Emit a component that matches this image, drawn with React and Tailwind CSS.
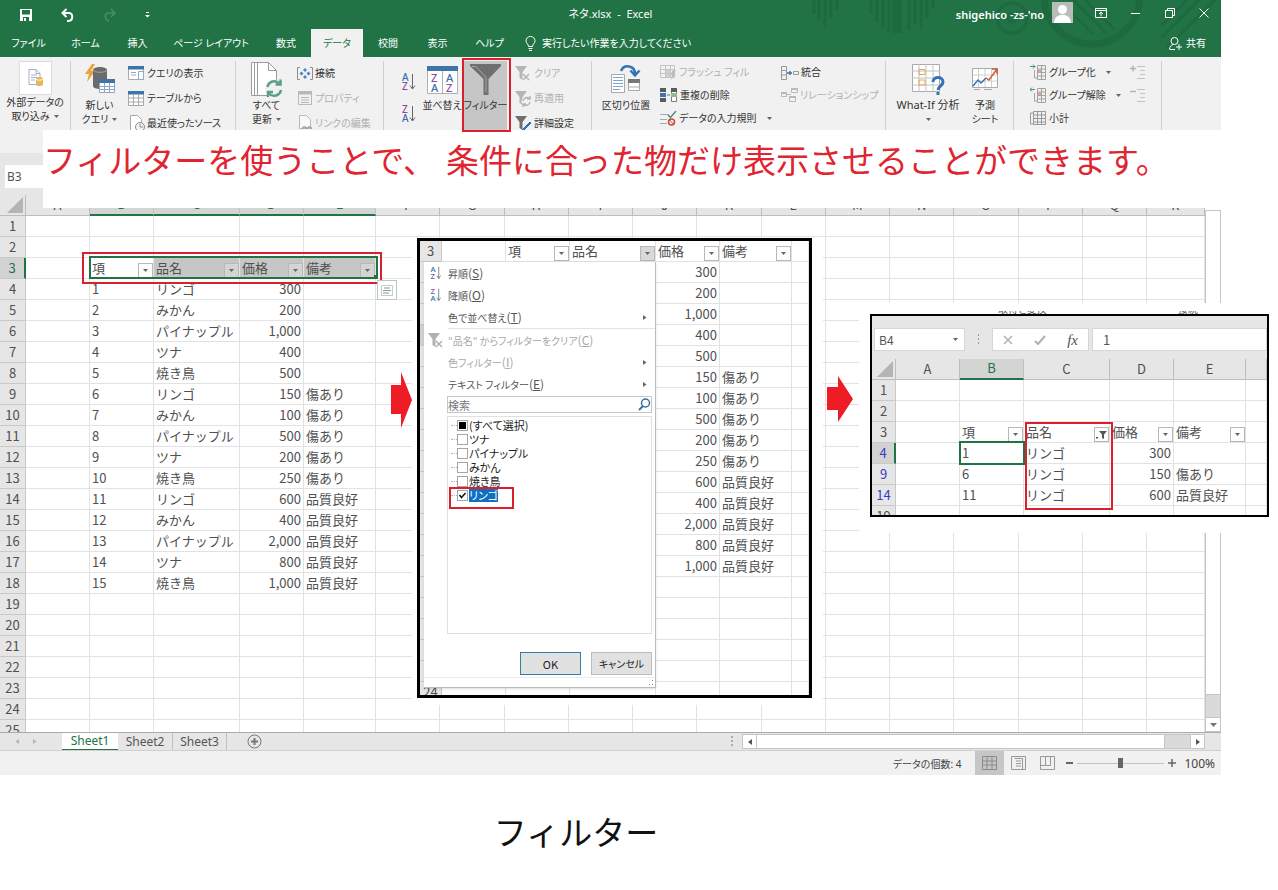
import React from "react";

const DATA = [
  ["1", "リンゴ", "300", ""],
  ["2", "みかん", "200", ""],
  ["3", "パイナップル", "1,000", ""],
  ["4", "ツナ", "400", ""],
  ["5", "焼き鳥", "500", ""],
  ["6", "リンゴ", "150", "傷あり"],
  ["7", "みかん", "100", "傷あり"],
  ["8", "パイナップル", "500", "傷あり"],
  ["9", "ツナ", "200", "傷あり"],
  ["10", "焼き鳥", "250", "傷あり"],
  ["11", "リンゴ", "600", "品質良好"],
  ["12", "みかん", "400", "品質良好"],
  ["13", "パイナップル", "2,000", "品質良好"],
  ["14", "ツナ", "800", "品質良好"],
  ["15", "焼き鳥", "1,000", "品質良好"],
];

const HEADINGS = ["項", "品名", "価格", "備考"];

/* ---------- small shared drawings ---------- */

function Svg({ w, h, vb, className = "", children }) {
  return (
    <svg width={w} height={h} viewBox={vb || `0 0 ${w} ${h}`} fill="none" className={`shrink-0 ${className}`} aria-hidden="true">
      {children}
    </svg>
  );
}

function Caret({ color = "#666" }) {
  return (
    <Svg w={5} h={3}>
      <path d="M0 0h5L2.5 3z" fill={color} />
    </Svg>
  );
}

function SortIcon({ top = "A", bottom = "Z", small = false }) {
  const a = top === "A" ? "#3b6fb0" : "#8c4a9a";
  const b = top === "A" ? "#8c4a9a" : "#3b6fb0";
  return (
    <Svg w={small ? 12 : 14} h={small ? 14 : 18} vb="0 0 14 18" className="overflow-visible">
      <g fontSize="10" fontWeight="500" fontFamily="Noto Sans">
        <text x="0" y="8" fill={a}>{top}</text>
        <text x="0" y="17" fill={b}>{bottom}</text>
      </g>
      <path d="M10.500 1v15M8 12.500l2.500 3.500 2.500-3.500" stroke="#666" />
    </Svg>
  );
}

function FunnelSmall({ kind, color = "#b5b5b5" }) {
  return (
    <Svg w={17} h={17}>
      <path d="M0 1h12L7.500 7v8l-3-2V7z" fill={color} />
      {kind === "clear" && <path d="M8 9l6 6M14 9l-6 6" stroke={color} strokeWidth="1.500" />}
      {kind === "reapply" && (
        <g stroke={color} strokeWidth="1.500">
          <circle cx="11.500" cy="11.500" r="5" fill="#f1f1f1" stroke="none" />
          <path d="M8 11a4 4 0 0 1 7-2M15 12a4 4 0 0 1-7 2M15 6v3h-3M8 17v-3h3" />
        </g>
      )}
      {kind === "advanced" && <path d="M15 7l-7 7-1 2 2-1 7-7z" fill="#2f6db5" stroke="#2f6db5" />}
    </Svg>
  );
}

/* ---------- worksheet grid ---------- */

function FilterButton({ name, active, tone = "bg-[#fdfdfd]" }) {
  return (
    <button type="button" aria-label={`${name} のフィルター`} className={`flex size-[15px] shrink-0 items-center justify-center border border-[#b8b8b8] ${tone}`}>
      {active ? (
        <Svg w={11} h={9}>
          <path d="M3 1h8L8 4.500V9L6 8V4.500z" fill="#555" />
          <path d="M0 7h2v1.500H0z" fill="#555" />
        </Svg>
      ) : (
        <Caret />
      )}
    </button>
  );
}

function HeadCell({ name, active, tone }) {
  return (
    <div className="flex h-5 items-end justify-between">
      <span className="leading-5">{name}</span>
      <FilterButton name={name} active={active} tone={tone} />
    </div>
  );
}

function Grid({ cols, head, rows, label }) {
  return (
    <table aria-label={label} className="w-full table-fixed border-separate border-spacing-0 text-[13px] leading-5 text-[#505050] [font-feature-settings:normal]">
      <colgroup>
        {cols.map((c, i) => (
          <col key={i} className={c.w} />
        ))}
      </colgroup>
      {head && (
        <thead>
          <tr className="h-[21px]">
            <th className="border-r border-b border-[#bdbdbd] bg-[#e6e6e6] p-0">
              <Svg w={18} h={18} className="ml-auto mr-px">
                <path d="M17 1v16H1z" fill="#b4b4b4" />
              </Svg>
            </th>
            {cols.slice(1).map((c, i) => (
              <th
                key={i}
                className={`h-[21px] border-r p-0 font-normal ${
                  c.on ? "border-b-2 border-r-[#bcc4be] border-b-[#217346] bg-[#d2d5d2] text-[#217346]" : "border-b border-[#bdbdbd] bg-[#e6e6e6]"
                } `}
              >
                <div className="h-[19px] leading-[17px]">{c.label}</div>
              </th>
            ))}
          </tr>
        </thead>
      )}
      <tbody>
        {rows.map((r) => (
          <tr key={r.n} className="h-[21px]">
            <th
              scope="row"
              className={`h-[21px] border-b border-[#c9c9c9] p-0 font-normal ${
                r.on ? "border-r-2 border-r-[#217346] bg-[#d2d2d2]" : "border-r bg-[#e6e6e6]"
              } ${r.ink || ""}`}
            >
              <div className="flex h-5 justify-center">{r.blank ? null : r.n}</div>
            </th>
            {cols.slice(1).map((c, i) => (
              <td
                key={i}
                className={`h-[21px] border-r border-b border-[#e2e2e2] p-0 whitespace-nowrap ${c.right && !r.heading ? "pr-0.5 text-right" : "pl-0.5"} ${
                  r.fill && r.fill[i] ? "bg-[#c6c6c6]" : ""
                }`}
              >
                {r.cells[i] || null}
              </td>
            ))}
          </tr>
        ))}
      </tbody>
    </table>
  );
}

const MAIN_COLS = [
  { w: "w-[26px]" },
  { w: "w-16", label: "A" },
  { w: "w-16", label: "B", on: true },
  { w: "w-[86px]", label: "C", on: true },
  { w: "w-16", label: "D", on: true, right: true },
  { w: "w-[72px]", label: "E", on: true },
  ..."FGHIJKLMNOPQ".split("").map((label) => ({ w: "", label })),
  { w: "w-[58px]", label: "R" },
];

const MAIN_ROWS = Array.from({ length: 25 }, (_, k) => {
  const n = k + 1;
  if (n === 3) {
    return {
      n,
      on: true,
      ink: "text-[#217346]",
      heading: true,
      fill: [false, false, true, true, true],
      cells: [
        "",
        ...HEADINGS.map((name, i) => (
          <div key={name} className="relative">
            <HeadCell name={name} tone={i === 0 ? "bg-[#fdfdfd]" : "bg-[#d4d4d4]"} />
            {i === 0 && (
              <div className="pointer-events-none absolute -top-0.5 -left-[3px] z-10 h-[23px] w-[289px] border-2 border-[#217346]">
                <div className="absolute -right-0.5 -bottom-0.5 size-1 bg-[#217346]" />
              </div>
            )}
          </div>
        )),
      ],
    };
  }
  return { n, cells: DATA[n - 4] ? ["", ...DATA[n - 4]] : [] };
});

const MENU_COLS = [
  { w: "w-[22px]" },
  { w: "w-16" },
  { w: "w-16" },
  { w: "w-[86px]" },
  { w: "w-16", right: true },
  { w: "w-[72px]" },
  { w: "" },
];

const MENU_ROWS = Array.from({ length: 22 }, (_, k) => {
  const n = k + 3;
  if (n === 3) {
    return {
      n,
      heading: true,
      cells: ["", ...HEADINGS.map((name, i) => <HeadCell key={name} name={name} tone={i === 1 ? "bg-[#d9d9d9]" : "bg-[#fdfdfd]"} />)],
    };
  }
  const d = DATA[n - 4];
  return { n, blank: n < 24, on: n === 7, cells: d ? ["", "", "", d[2], d[3]] : [] };
});

const RESULT_COLS = [
  { w: "w-6" },
  { w: "w-16", label: "A" },
  { w: "w-16", label: "B", on: true },
  { w: "w-[86px]", label: "C" },
  { w: "w-16", label: "D", right: true },
  { w: "w-[72px]", label: "E" },
  { w: "", label: "" },
];

const BLUE = "text-[#3b3bc4]";

const RESULT_ROWS = [
  { n: 1, cells: [] },
  { n: 2, cells: [] },
  { n: 3, heading: true, cells: ["", ...HEADINGS.map((name, i) => <HeadCell key={name} name={name} active={i === 1} />)] },
  {
    n: 4,
    on: true,
    ink: BLUE,
    cells: [
      "",
      <div key="b4" className="relative">
        {DATA[0][0]}
        <div className="pointer-events-none absolute -top-0.5 -left-[3px] h-6 w-[66px] border-2 border-[#217346]" />
      </div>,
      ...DATA[0].slice(1),
    ],
  },
  { n: 9, ink: BLUE, cells: ["", ...DATA[5]] },
  { n: 14, ink: BLUE, cells: ["", ...DATA[10]] },
  { n: 19, cells: [] },
];

/* ---------- title bar and ribbon tabs ---------- */

function TitleBar() {
  return (
    <div className="relative flex h-[29px] items-center px-3">
      <div className="flex flex-1 items-center gap-[29px]">
        <button type="button" aria-label="上書き保存" className="ml-2">
          <Svg w={12} h={12}>
            <path d="M0 0h12v12H0z" fill="#fff" />
            <path d="M2 1h8v4.500H2zM3 8h6v4H3z" fill="#217346" />
            <path d="M4 9h2v3H4z" fill="#fff" />
          </Svg>
        </button>
        <button type="button" aria-label="元に戻す">
          <Svg w={13} h={14}>
            <path d="M5.500 1L1.500 5l4 4M2 5h5.500c5 0 5 7.500 0 8H6" stroke="#fff" strokeWidth="2" />
          </Svg>
        </button>
        <button type="button" aria-label="やり直し">
          <Svg w={13} h={14}>
            <path d="M8 1l4 4-4 4M11 5H6c-5 0-5 6 0 8" stroke="#4a8d68" strokeWidth="1.500" />
          </Svg>
        </button>
        <button type="button" aria-label="クイック アクセス ツール バーのユーザー設定">
          <Svg w={5} h={6}>
            <path d="M1 0h3v1H1zM0 3h5L2.500 5.500z" fill="#fff" />
          </Svg>
        </button>
      </div>
      <h1 className="text-[11px] whitespace-pre">ネタ.xlsx  -  Excel</h1>
      <div className="flex flex-1 items-center justify-end pb-1">
        <span className="pt-1 text-[11px] leading-4 font-semibold">shigehico -zs-'no</span>
        <Svg w={21} h={21} className="ml-2">
          <path d="M0 0h21v21H0z" fill="#b9bdb9" />
          <circle cx="10.500" cy="7.500" r="4.500" fill="#fff" />
          <path d="M2 21c0-11 17-11 17 0z" fill="#fff" />
        </Svg>
        <button type="button" aria-label="リボンの表示オプション" className="ml-[22px]">
          <Svg w={12} h={10}>
            <path d="M.5.5h11v9H.5zM.5 2.500h11M6 8.500v-4M4 6l2-2 2 2" stroke="#fff" />
          </Svg>
        </button>
        <button type="button" aria-label="最小化" className="ml-6">
          <Svg w={10} h={10}>
            <path d="M0 5.500h9" stroke="#fff" />
          </Svg>
        </button>
        <button type="button" aria-label="元のサイズに戻す" className="ml-6">
          <Svg w={10} h={10}>
            <path d="M.5 2.500h7v7h-7zM2.500 2.500v-2h7v7h-2" stroke="#fff" />
          </Svg>
        </button>
        <button type="button" aria-label="閉じる" className="ml-6">
          <Svg w={10} h={10}>
            <path d="M.5.5l9 9M9.500.5l-9 9" stroke="#fff" />
          </Svg>
        </button>
      </div>
    </div>
  );
}

const TABS = [
  ["ファイル", "w-[57px]"],
  ["ホーム", "w-[57px]"],
  ["挿入", "w-[47px]"],
  ["ページ レイアウト", "w-[100px]"],
  ["数式", "w-[50px]"],
  ["データ", "w-[52px]"],
  ["校閲", "w-[50px]"],
  ["表示", "w-[49px]"],
  ["ヘルプ", "w-[55px]"],
];

function TabBar() {
  return (
    <nav className="relative flex h-7 items-stretch text-[10px]">
      {TABS.map(([name, w]) => (
        <button key={name} type="button" className={`${w} whitespace-nowrap ${name === "データ" ? "bg-[#f1f1f1] text-[#217346]" : ""}`}>
          {name}
        </button>
      ))}
      <button type="button" className="flex items-center gap-1.5 pl-2 whitespace-nowrap">
        <Svg w={11} h={15}>
          <path d="M3.500 10.500C3.500 8 1 7.500 1 4.800a4.400 4.300 0 0 1 9 0c0 2.700-2.500 3.200-2.500 5.700zM3.500 12.500h4M4 14.500h3" stroke="#fff" />
        </Svg>
        実行したい作業を入力してください
      </button>
      <button type="button" className="ml-auto flex items-center gap-1 pr-[15px]">
        <Svg w={13} h={13}>
          <circle cx="5.500" cy="4" r="3.500" stroke="#fff" />
          <path d="M.5 12.500c0-3 2-5 4-5M7 10h6M10 7v6M1 12.500h5" stroke="#fff" />
        </Svg>
        共有
      </button>
    </nav>
  );
}

function HeaderPattern() {
  return (
    <Svg w={410} h={57} className="absolute top-0 right-0">
      <g stroke="#1e693f" strokeWidth="3">
        <path d="M3 0v14M8 0v20M14 0v27M20 0v18M26 0v10M60 0v14M66 0v22M72 0v28M78 0v32M98 0v30M104 0v24M110 0v28M116 0v18M122 0v8" />
        <path d="M86 0v33" strokeWidth="9" />
        <circle cx="201" cy="18" r="15" />
        <circle cx="201" cy="18" r="4" />
        <circle cx="281" cy="-4" r="48" strokeWidth="7" />
        <path d="M252 4l30 30M262 0l34 34M274 0l30 30M350 38l38-38M350 26l26-26M356 48l48-48" />
      </g>
    </Svg>
  );
}

/* ---------- ribbon ---------- */

function Group({ w, children }) {
  return <div className={`flex shrink-0 items-start border-r border-[#cfcfcf] ${w}`}>{children}</div>;
}

function Big({ icon, lines, caret, iconBox = "h-[37px]", className = "" }) {
  return (
    <button type="button" className={`flex flex-col items-center whitespace-nowrap ${className}`}>
      <span className={`flex items-center ${iconBox}`}>{icon}</span>
      {lines.map((t, i) => (
        <span key={i} className="flex h-[14px] items-center gap-1 leading-[14px]">
          {t}
          {caret && i === lines.length - 1 && <Caret />}
        </span>
      ))}
    </button>
  );
}

function Small({ icon, text, off, caret, tall }) {
  return (
    <button type="button" className={`flex items-center gap-0.5 whitespace-nowrap ${tall ? "h-[25px]" : "h-[23px]"} ${off ? "text-[#b0b0b0]" : ""}`}>
      {icon}
      <span>{text}</span>
      {caret && (
        <span className="ml-2">
          <Caret />
        </span>
      )}
    </button>
  );
}

function MiniTable({ head = "#3f74a8", line = "#a9a9a9", w = 17 }) {
  return (
    <Svg w={w} h={16} vb="0 0 17 16">
      <path d="M.5 .5h15v14h-15z" fill="#fff" stroke={line} />
      <path d="M0 0h16v3.500H0z" fill={head} />
      <path d="M1 7h14M1 11h14M5.500 4v11M10.500 4v11" stroke={line} />
    </Svg>
  );
}

function FlashGlyph() {
  return (
    <Svg w={17} h={16}>
      <path d="M.5.500h14v12H.5zM.5 4.500h14M.5 8.500h14M5.500.5v12M10.500.5v12" stroke="#c4c4c4" />
      <path d="M6 5h4v3H6zM6 9h4v3H6z" fill="#cfcfcf" />
      <path d="M13 5l-3 5h2l-1 5 5-6h-2l2-4z" fill="#bdbdbd" />
    </Svg>
  );
}

function GroupGlyph({ dir }) {
  return (
    <Svg w={17} h={17}>
      <path d={dir === "in" ? "M0 2.500h5M3 .5l2 2-2 2" : "M5 2.500H0M2 .5l-2 2 2 2"} stroke="#4c8f74" />
      <path d="M7.500 1.500h8v14h-8zM7.500 5h8M7.500 8.500h8M7.500 12h8M11.500 1.500v14M4.500 6v8h3" stroke="#a2a2a2" />
      <path d="M8 5.500h3v3H8z" fill="#d7a48c" />
    </Svg>
  );
}

function DetailGlyph({ plus }) {
  return (
    <Svg w={16} h={15}>
      <path d={plus ? "M0 3.500h6M3 .5v6" : "M0 3.500h6"} stroke="#b5b5b5" strokeWidth="1.500" />
      <path d="M7 1.500h8M10 5.500h5M10 9.500h5M7 13.500h8" stroke="#c4c4c4" />
    </Svg>
  );
}

function Ribbon() {
  return (
    <div className="flex h-24 overflow-hidden bg-[#f1f1f1] pt-1 text-[10px] text-[#333]">
      <Group w="h-23 w-[71px] justify-center">
        <Big
          caret
          iconBox="h-[34px]"
          lines={["外部データの", "取り込み"]}
          icon={
            <span className="flex h-[34px] w-[33px] items-center justify-center border border-[#dcdcdc] bg-white">
              <Svg w={15} h={18}>
                <path d="M1 .5h7l4 4v11H1z" fill="#fff" stroke="#9fb0c6" />
                <path d="M8 .5v4h4M3 6h6M3 8.500h6M3 11h4" stroke="#9fb0c6" />
                <path d="M8 9.500c0-2 7-2 7 0v6c0 2-7 2-7 0z" fill="#e8b659" />
                <path d="M8 10c0 1.500 7 1.500 7 0" stroke="#fff" />
              </Svg>
            </span>
          }
        />
      </Group>

      <Group w="h-23 w-[165px]">
        <Big
          caret
          className="w-[57px]"
          lines={["新しい", "クエリ"]}
          icon={
            <Svg w={30} h={32}>
              <path d="M7 0L0 10h4l-2 8 8-11H6l4-7z" fill="#e9a33c" />
              <path d="M8 6c0-4 14-4 14 0v16c0 4-14 4-14 0z" fill="#6b6b6b" />
              <path d="M8 6c0 3 14 3 14 0" stroke="#a5a5a5" />
              <path d="M14.500 15.500h15v13h-15z" fill="#fff" stroke="#8ea6c2" />
              <path d="M14 15h16v4H14z" fill="#3f74a8" />
              <path d="M15 22.500h14M15 25.500h14M19.500 19v9M24.500 19v9" stroke="#8ea6c2" />
            </Svg>
          }
        />
        <div className="flex flex-col items-start">
          <Small
            tall
            text="クエリの表示"
            icon={
              <Svg w={17} h={15}>
                <path d="M.5.5h15v13H.5z" fill="#fff" stroke="#a9a9a9" />
                <path d="M0 0h16v3.500H0z" fill="#3f74a8" />
                <path d="M3 6.500h5M3 9h5M10.500 5.500h5v8h-5z" stroke="#8fa9c8" />
              </Svg>
            }
          />
          <Small tall text="テーブルから" icon={<MiniTable />} />
          <Small
            tall
            text="最近使ったソース"
            icon={
              <Svg w={17} h={17}>
                <path d="M2.500.5h7l4 4v12h-11z" fill="#fff" stroke="#a9a9a9" />
                <circle cx="12" cy="12" r="4.500" fill="#f1f1f1" stroke="#8c8c8c" />
                <path d="M12 9v3h3" stroke="#8c8c8c" />
              </Svg>
            }
          />
        </div>
      </Group>

      <Group w="h-23 w-[148px]">
        <Big
          caret
          className="w-[61px]"
          lines={["すべて", "更新"]}
          icon={
            <Svg w={32} h={36}>
              <path d="M.5.500h17l8 8v25H.5z" fill="#fff" stroke="#9c9c9c" />
              <path d="M3.500.5v33M6.500.5v33M17.500.5v8h8" stroke="#9c9c9c" />
              <circle cx="23" cy="26.500" r="9" fill="#f1f1f1" />
              <path d="M16.500 25a7 7 0 0 1 12-3.500M30 28a7 7 0 0 1-12 3.500M29.500 17.500v5h-5M17 35v-5h5" stroke="#5a9f86" strokeWidth="2.500" />
            </Svg>
          }
        />
        <div className="flex flex-col items-start">
          <Small
            tall
            text="接続"
            icon={
              <Svg w={16} h={13}>
                <path d="M3 .5H.5v12H3M13 .5h2.500v12H13" stroke="#8d8d8d" />
                <path d="M8 1l2 2-2 2-2-2zM8 8l2 2-2 2-2-2zM4.500 4.500l2 2-2 2-2-2zM11.500 4.500l2 2-2 2-2-2z" fill="#4d86c2" />
              </Svg>
            }
          />
          <Small
            tall
            off
            text="プロパティ"
            icon={
              <Svg w={16} h={15}>
                <path d="M1.500.5h13v13h-13z" stroke="#b9b9b9" />
                <path d="M1 0h14v3.500H1z" fill="#b9b9b9" />
                <path d="M4 6.500h8M4 9h8M4 11.500h8" stroke="#b9b9b9" />
              </Svg>
            }
          />
          <Small
            tall
            off
            text="リンクの編集"
            icon={
              <Svg w={16} h={17}>
                <path d="M2.500.5h7l4 4v9h-11z" fill="#f8f8f8" stroke="#b9b9b9" />
                <path d="M5.500 14a2 2 0 0 1 4 0M10.500 14a2 2 0 0 1 4 0" stroke="#a0a0a0" strokeWidth="1.500" />
              </Svg>
            }
          />
        </div>
      </Group>

      <Group w="h-23 w-[208px]">
        <div className="flex w-9 flex-col items-end gap-[14px] pt-3 pr-1">
          <button type="button" aria-label="昇順"><SortIcon /></button>
          <button type="button" aria-label="降順"><SortIcon top="Z" bottom="A" /></button>
        </div>
        <Big
          className="w-11"
          lines={["並べ替え"]}
          icon={
            <Svg w={31} h={28}>
              <path d="M.5.5h30v27H.5z" fill="#fff" stroke="#b0b0b0" />
              <path d="M0 0h31v5H0z" fill="#3f74a8" />
              <path d="M15.500 5v23" stroke="#b0b0b0" />
              <g fontSize="11" fontWeight="500" fontFamily="Noto Sans">
                <text x="4" y="16" fill="#8c4a9a">Z</text>
                <text x="4" y="26" fill="#3b6fb0">A</text>
                <text x="19" y="16" fill="#3b6fb0">A</text>
                <text x="19" y="26" fill="#8c4a9a">Z</text>
              </g>
            </Svg>
          }
        />
        <Big
          className="h-[69px] w-[43px] bg-[#c6c6c6]"
          lines={["フィルター"]}
          icon={
            <Svg w={31} h={32}>
              <path d="M0 0h31v2L18.500 15v16h-5V15L0 2z" fill="#6f6f6f" />
              <path d="M2 2.500h4l10 11v15" stroke="#a8a8a8" />
            </Svg>
          }
        />
        <div className="ml-2 flex flex-col items-start">
          <Small tall off text="クリア" icon={<FunnelSmall kind="clear" />} />
          <Small tall off text="再適用" icon={<FunnelSmall kind="reapply" />} />
          <Small tall text="詳細設定" icon={<FunnelSmall kind="advanced" color="#6f6f6f" />} />
        </div>
      </Group>

      <Group w="h-23 w-[294px]">
        <Big
          className="w-[68px]"
          lines={["区切り位置"]}
          icon={
            <Svg w={32} h={31}>
              <path d="M1.500 10.500h13v18h-13z" fill="#fff" stroke="#a9a9a9" />
              <path d="M3 13.500h10M3 16.500h10M3 19.500h10M3 22.500h10M3 25.500h7" stroke="#7ba3cc" />
              <path d="M18.500 15.500h11v11h-11z" fill="#fff" stroke="#a9a9a9" />
              <path d="M18 15h12v4H18z" fill="#777" />
              <path d="M18 23h12" stroke="#a9a9a9" />
              <path d="M11 7c3-7 14-6 14 3M20.500 6.500l4.500 5 4.500-5" stroke="#3573b4" strokeWidth="2.500" />
            </Svg>
          }
        />
        <div className="flex w-[121px] flex-col items-start">
          <Small off text="フラッシュ フィル" icon={<FlashGlyph />} />
          <Small
            text="重複の削除"
            icon={
              <Svg w={18} h={15}>
                <path d="M0 0h6v4H0zM0 10h6v4H0z" fill="#5a5a5a" />
                <path d="M0 5h6v4H0z" fill="#3f74a8" />
                <path d="M11.500.5h5v13h-5z" fill="#fff" stroke="#777" />
                <path d="M11 0h6v4h-6z" fill="#5a5a5a" />
                <path d="M11 5h6v4h-6z" fill="#8fb98f" />
                <path d="M7 7h3" stroke="#666" />
              </Svg>
            }
          />
          <Small
            caret
            text="データの入力規則"
            icon={
              <Svg w={17} h={15}>
                <path d="M0 3.500h9M0 8.500h7M0 12.500h7" stroke="#a9a9a9" />
                <path d="M8 4l2.500 2.500L16 0" stroke="#4c8f74" strokeWidth="1.500" />
                <circle cx="11.500" cy="11" r="3" stroke="#c9483d" strokeWidth="1.500" />
                <path d="M9.500 9l4 4" stroke="#c9483d" />
              </Svg>
            }
          />
        </div>
        <div className="flex flex-col items-start">
          <Small
            text="統合"
            icon={
              <Svg w={18} h={14}>
                <path d="M.5.500h5v13h-5zM.5 4.500h5M.5 9h5M12.500 5.500h5v3h-5z" stroke="#999" />
                <path d="M6 7h5M9 5v4" stroke="#3f74a8" strokeWidth="1.500" />
              </Svg>
            }
          />
          <Small
            off
            text="リレーションシップ"
            icon={
              <Svg w={17} h={15}>
                <path d="M.5 4.500h5v4h-5zM10.500.5h6v4h-6zM8.500 8.500h6v5h-6zM6 6.500h4" stroke="#b9b9b9" />
                <path d="M0 4h6v2H0zM10 0h7v2h-7zM8 8h7v2H8z" fill="#b9b9b9" />
              </Svg>
            }
          />
        </div>
      </Group>

      <Group w="h-23 w-[128px]">
        <Big
          className="w-[84px]"
          lines={[<span key="t" className="text-[11px]">What-If 分析</span>, <Caret key="c" />]}
          icon={
            <Svg w={33} h={33}>
              <path d="M.5 1.500h27v27H.5z" fill="#fff" stroke="#a9a9a9" />
              <path d="M0 8h28M0 15h28M0 22h28M7 1v28M14 1v28M21 1v28" stroke="#c2c2c2" />
              <path d="M7 6.500h6v5H7zM7 17h6v5H7z" stroke="#e3a75a" />
              <path d="M21 19c0-6 10-6 10 0 0 4-5 4-5 8M26 29v3" stroke="#3573b4" strokeWidth="3" />
            </Svg>
          }
        />
        <Big
          className="w-[30px]"
          lines={["予測", "シート"]}
          icon={
            <Svg w={27} h={25}>
              <path d="M.5 1.500h25v19H.5z" fill="#fff" stroke="#a9a9a9" />
              <path d="M6.500 2v18M13 2v18M19.500 2v18M1 8h24M1 14h24" stroke="#d0d0d0" />
              <path d="M1 19l5-6 3 3 5-5" stroke="#3573b4" strokeWidth="1.500" />
              <path d="M14 11l3 2 8-11M20 2h5v5" stroke="#cb5a3c" strokeWidth="1.500" />
              <path d="M2 22.500h6M12 22.500h8" stroke="#a9a9a9" />
            </Svg>
          }
        />
      </Group>

      <Group w="h-23 w-[148px] justify-between pl-4 pr-[15px]">
        <div className="flex flex-col items-start">
          <Small caret text="グループ化" icon={<GroupGlyph dir="in" />} />
          <Small caret text="グループ解除" icon={<GroupGlyph dir="out" />} />
          <Small
            text="小計"
            icon={
              <Svg w={17} h={15}>
                <path d="M3.500.5h12v13h-12zM3.500 4h12M3.500 7.500h12M3.500 11h12M7.500.5v13M11.500.5v13M3 2H.5v11H3" stroke="#999" />
              </Svg>
            }
          />
        </div>
        <div className="flex flex-col">
          <button type="button" aria-label="詳細データの表示" className="flex h-[23px] items-center"><DetailGlyph plus /></button>
          <button type="button" aria-label="詳細を表示しない" className="flex h-[23px] items-center"><DetailGlyph /></button>
        </div>
      </Group>
    </div>
  );
}

/* ---------- filter menu panel ---------- */

function MenuItem({ icon, text, accel, off, sub }) {
  return (
    <li>
      <button type="button" className={`flex h-[22px] w-full items-center whitespace-nowrap ${off ? "text-[#a8a8a8]" : "text-[#555]"}`}>
        <span className="flex w-6 shrink-0 justify-center">{icon}</span>
        <span className="flex-1 text-left">
          {text}
          <span className="text-[12px]">(<u>{accel}</u>)</span>
        </span>
        {sub && (
          <Svg w={4} h={5} className="mr-2">
            <path d="M0 0v5l3.500-2.500z" fill="#666" />
          </Svg>
        )}
      </button>
    </li>
  );
}

const CHOICES = ["(すべて選択)", "ツナ", "パイナップル", "みかん", "焼き鳥", "リンゴ"];

function Choice({ label, state }) {
  return (
    <label className="flex h-[14px] items-center">
      <span aria-hidden="true" className="w-1.5 border-t border-dotted border-[#b5b5b5]" />
      <span className="relative flex size-[11px]">
        <input type="checkbox" defaultChecked={state === "on"} className="size-[11px] appearance-none border border-[#a5a5a5] bg-white" />
        {state === "mixed" && <span className="pointer-events-none absolute inset-[2px] bg-black" />}
        {state === "on" && (
          <Svg w={11} h={11} className="pointer-events-none absolute inset-0">
            <path d="M2.500 5l2 2.500 4-4.500" stroke="#111" strokeWidth="1.500" />
          </Svg>
        )}
      </span>
      <span className={`ml-px leading-[14px] ${state === "on" ? "bg-[#0f6fc0] text-white" : "text-[#222]"}`}>{label}</span>
    </label>
  );
}

function FilterMenu() {
  return (
    <div className="absolute top-[21px] left-1 flex h-[426px] w-[232px] flex-col border-r border-b border-[#bcbcbc] bg-white text-[10px] leading-4 shadow-sm">
      <ul>
        <MenuItem text="昇順" accel="S" icon={<SortIcon small />} />
        <MenuItem text="降順" accel="O" icon={<SortIcon small top="Z" bottom="A" />} />
        <MenuItem text="色で並べ替え" accel="T" sub />
        <li role="separator" className="ml-6 h-px bg-[#e2e2e2]" />
        <MenuItem text={'"品名" からフィルターをクリア'} accel="C" off icon={<FunnelSmall kind="clear" color="#b0b0b0" />} />
        <MenuItem text="色フィルター" accel="I" off sub />
        <MenuItem text="テキスト フィルター" accel="E" sub />
      </ul>
      <div className="mt-px mr-[3px] ml-[23px] flex h-[17px] items-center border border-[#c0c8cc]">
        <input aria-label="検索" placeholder="検索" className="min-w-0 flex-1 bg-transparent text-[11px] placeholder-[#777] outline-none" />
        <Svg w={13} h={13}>
          <circle cx="7.500" cy="5" r="4" stroke="#3b6f9f" strokeWidth="1.500" />
          <path d="M5 8l-4 4" stroke="#3b6f9f" strokeWidth="2" />
        </Svg>
      </div>
      <div className="mt-[3px] mr-[3px] ml-[23px] flex h-[226px] flex-col border border-[#e0e0e0] pt-px pl-[3px] text-[11px]">
        {CHOICES.map((c, i) => (
          <Choice key={c} label={c} state={i === 0 ? "mixed" : i === 5 ? "on" : "off"} />
        ))}
      </div>
      <div className="mt-[18px] mr-[3px] flex justify-end gap-2.5">
        <button type="button" className="h-[23px] w-[61px] border border-[#2f7fa8] bg-[#e1e1e1] text-[11px] text-[#222]">OK</button>
        <button type="button" className="h-[23px] w-[61px] border border-[#bcbcbc] bg-[#e1e1e1] text-[#222]">キャンセル</button>
      </div>
      <div className="mt-0.5 flex flex-1 items-end justify-end border-t border-[#ececec] p-px">
        <Svg w={7} h={7}>
          <path d="M5 1h1v1H5zM2 5h1v1H2zM5 5h1v1H5z" fill="#888" />
        </Svg>
      </div>
    </div>
  );
}

function MenuPanel() {
  return (
    <section aria-label="フィルターの条件" className="absolute top-[238px] left-[412px] h-[467px] w-[411px] bg-white pl-[5px]">
      <div className="h-[460px] w-[395px] border-[3px] border-black">
        <div className="relative h-full">
          <div className="h-full overflow-hidden">
            <Grid label="フィルターの対象" cols={MENU_COLS} rows={MENU_ROWS} />
          </div>
          <FilterMenu />
          <div className="absolute top-[246px] left-[29px] h-[22px] w-[65px] border-2 border-[#d9202c]" />
        </div>
      </div>
    </section>
  );
}

/* ---------- filtered result panel ---------- */

function ResultPanel() {
  return (
    <section aria-label="フィルターの結果" className="absolute top-[303px] left-[859px] h-[230px] w-[419px] bg-white pt-[11px] pl-[11px]">
      <div className="absolute top-[8px] left-[139px] flex h-1 w-[200px] items-end justify-between overflow-hidden text-[10px] leading-3 text-[#555]">
        <span>取得と変換</span>
        <span>接続</span>
      </div>
      <div className="relative h-[203px] w-[399px] border-2 border-black">
        <div className="h-full overflow-hidden bg-white">
          <div className="flex h-[43px] items-center bg-[#e6e6e6] pt-1 text-[#555]">
            <div className="ml-0.5 flex h-[23px] w-[91px] items-center border border-[#d6d6d6] bg-white pr-1.5 pl-1">
              <input aria-label="名前ボックス" defaultValue="B4" className="min-w-0 flex-1 text-[12px] outline-none" />
              <Caret />
            </div>
            <Svg w={3} h={11} className="mx-3">
              <path d="M1 0h1v2H1zM1 4h1v2H1zM1 8h1v2H1z" fill="#999" />
            </Svg>
            <div className="flex h-[23px] w-[97px] items-center justify-between border border-[#d6d6d6] bg-white px-2.5">
              <Svg w={10} h={10}>
                <path d="M1 1l8 8M9 1L1 9" stroke="#b0b0b0" strokeWidth="1.500" />
              </Svg>
              <Svg w={12} h={10}>
                <path d="M1 6l3 3 7-8" stroke="#b0b0b0" strokeWidth="2" />
              </Svg>
              <span className="font-['Liberation_Serif',serif] text-[15px] leading-5 italic">fx</span>
            </div>
            <div className="ml-[3px] flex h-[23px] flex-1 border border-[#d6d6d6] bg-white pl-2.5">
              <input aria-label="数式バー" defaultValue="1" className="w-full text-[13px] outline-none" />
            </div>
          </div>
          <Grid label="リンゴだけを表示した表" cols={RESULT_COLS} head rows={RESULT_ROWS} />
        </div>
        <div className="absolute top-[106px] left-[153px] h-[88px] w-[88px] border-2 border-[#d9202c]" />
      </div>
    </section>
  );
}

/* ---------- sheet tabs and status bar ---------- */

function SheetTabs() {
  return (
    <div className="flex h-[19px] items-stretch border-t border-b border-t-[#ababab] border-b-[#d0d0d0] bg-[#e6e6e6] text-xs leading-4 text-[#555]">
      <div className="flex w-[62px] items-center gap-[14px] pl-[15px]">
        <Svg w={4} h={5}><path d="M4 0v5L.5 2.500z" fill="#b5b5b5" /></Svg>
        <Svg w={4} h={5}><path d="M0 0v5l3.500-2.500z" fill="#b5b5b5" /></Svg>
      </div>
      <button type="button" className="w-14 border-b border-[#217346] bg-white text-[#217346]">Sheet1</button>
      <button type="button" className="w-[55px] border-r border-[#c0c0c0]">Sheet2</button>
      <button type="button" className="w-[54px] border-r border-[#c0c0c0]">Sheet3</button>
      <button type="button" aria-label="新しいシート" className="flex items-center px-5">
        <Svg w={15} h={15}>
          <circle cx="7.500" cy="7.500" r="6.500" stroke="#777" />
          <path d="M7.500 4v7M4 7.500h7" stroke="#777" strokeWidth="2" />
        </Svg>
      </button>
      <div className="ml-auto flex w-[490px] items-center">
        <Svg w={3} h={11}><path d="M0 0h2v2H0zM0 4h2v2H0zM0 8h2v2H0z" fill="#ababab" /></Svg>
        <div className="ml-2 flex h-[15px] flex-1 border border-[#c6c6c6] bg-[#dadada]">
          <button type="button" aria-label="左へスクロール" className="flex w-[14px] items-center justify-center border-r border-[#c6c6c6] bg-white">
            <Svg w={4} h={6}><path d="M4 0v6L0 3z" fill="#555" /></Svg>
          </button>
          <div className="flex-1 border-r border-[#c6c6c6] bg-white" />
          <div className="w-[25px]" />
          <button type="button" aria-label="右へスクロール" className="flex w-[14px] items-center justify-center border-l border-[#c6c6c6] bg-white">
            <Svg w={4} h={6}><path d="M0 0v6l4-3z" fill="#555" /></Svg>
          </button>
        </div>
        <div className="w-4" />
      </div>
    </div>
  );
}

function StatusBar() {
  return (
    <div className="flex h-6 items-stretch justify-end bg-[#f1f1f1] pr-1.5 text-[10px] leading-4 text-[#444]">
      <span className="mr-[14px] self-center pt-0.5">データの個数: 4</span>
      <button type="button" aria-label="標準" className="flex w-[29px] items-center justify-center bg-[#c6c6c6]">
        <Svg w={15} h={14}><path d="M.5.500h14v13H.5zM.5 5h14M.5 9h14M5 .5v13M10 .5v13" stroke="#8a8a8a" /></Svg>
      </button>
      <button type="button" aria-label="ページ レイアウト" className="flex w-[29px] items-center justify-center">
        <Svg w={15} h={14}><path d="M.5.500h14v13H.5zM3.500 2.500h8v11h-8M5 5h5M5 7.500h5M5 10h5" stroke="#999" /></Svg>
      </button>
      <button type="button" aria-label="改ページ プレビュー" className="flex w-[29px] items-center justify-center">
        <Svg w={15} h={14}><path d="M.5.500h14v13H.5zM5.500.5v9h-5M5.500 9.500h5v-9" stroke="#999" /></Svg>
      </button>
      <button type="button" aria-label="縮小" className="ml-1 flex items-center">
        <Svg w={7} h={2}><path d="M0 0h7v2H0z" fill="#666" /></Svg>
      </button>
      <input
        type="range"
        aria-label="ズーム"
        className="mx-1 h-6 w-[87px] appearance-none bg-[linear-gradient(#c2c2c2,#c2c2c2)] bg-[length:100%_1px] bg-center bg-no-repeat [&::-webkit-slider-thumb]:h-[10px] [&::-webkit-slider-thumb]:w-[5px] [&::-webkit-slider-thumb]:appearance-none [&::-webkit-slider-thumb]:bg-[#666]"
      />
      <button type="button" aria-label="拡大" className="flex items-center">
        <Svg w={8} h={8}><path d="M4 0v8M0 4h8" stroke="#666" strokeWidth="1.500" /></Svg>
      </button>
      <span className="ml-2 self-center pt-0.5 text-xs">100%</span>
    </div>
  );
}

/* ---------- page ---------- */

export default function App() {
  return (
    <main className="relative min-h-screen overflow-hidden bg-white font-['Noto_Sans','Noto_Sans_CJK_JP',sans-serif] [font-feature-settings:'palt']">
      <div className="mr-[57px]">
        <header className="relative bg-[#217346] text-white">
          <HeaderPattern />
          <TitleBar />
          <TabBar />
        </header>
        <Ribbon />
        <div className="h-[42px] bg-[#e6e6e6] pt-2.5 pl-[5px]">
          <input aria-label="名前ボックス" defaultValue="B3" className="h-[23px] w-20 bg-white px-0.5 text-[12px] text-[#555] outline-none" />
        </div>
        <div className="flex h-[537px] overflow-hidden font-['Noto_Sans_CJK_JP',sans-serif]">
          <div className="min-w-0 flex-1">
            <Grid label="ワークシート" cols={MAIN_COLS} head rows={MAIN_ROWS} />
          </div>
          <div className="mt-[15px] flex w-4 flex-col border border-[#c6c6c6] bg-[#dadada]">
            <div className="flex-1 border-b border-[#c6c6c6] bg-white" />
            <div className="h-[22px]" />
            <button type="button" aria-label="下へスクロール" className="flex h-[14px] items-center justify-center border-t border-[#c6c6c6] bg-white">
              <Svg w={7} h={4}><path d="M0 0h7L3.500 4z" fill="#777" /></Svg>
            </button>
          </div>
        </div>
        <SheetTabs />
        <StatusBar />
      </div>

      <h2 className="mr-[126px] pt-8 text-center font-['Noto_Sans_CJK_JP',sans-serif] text-[33px] leading-[48px] text-[#111] [font-feature-settings:normal]">
        フィルター
      </h2>

      <p className="absolute top-[130px] right-0 left-[43px] h-[78px] bg-white pt-1 font-['Noto_Sans_CJK_JP',sans-serif] text-[33px] leading-[50px] whitespace-nowrap text-[#e02430] [font-feature-settings:normal]">
        フィルターを使うことで、<span className="ml-2.5">条件に合った物だけ表示させることができます。</span>
      </p>

      <div className="absolute top-[58px] left-[462px] h-[74px] w-[49px] border-2 border-[#d9202c]" />
      <div className="absolute top-[252px] left-[82px] h-8 w-[300px] border-2 border-[#d9202c]" />

      <div className="font-['Noto_Sans_CJK_JP',sans-serif]">
        <button type="button" aria-label="クイック分析" className="absolute top-[280px] left-[377px] flex h-5 w-5 items-center justify-center border border-[#b5c9bd] bg-white">
          <Svg w={12} h={11}>
            <path d="M.5.500h11v10H.5z" stroke="#c9c9c9" />
            <path d="M3 3h6M2 5.500h8M2 8h6" stroke="#7f9f8c" />
          </Svg>
        </button>
        <MenuPanel />
        <ResultPanel />
      </div>

      <Svg w={21} h={56} className="absolute top-[372px] left-[391px]">
        <path d="M0 13h10V0l11 28-11 28V42H0z" fill="#ee1c25" />
      </Svg>
      <Svg w={26} h={46} className="absolute top-[376px] left-[827px]">
        <path d="M0 11h11V0l15 23-15 23V34H0z" fill="#ee1c25" />
      </Svg>
    </main>
  );
}
